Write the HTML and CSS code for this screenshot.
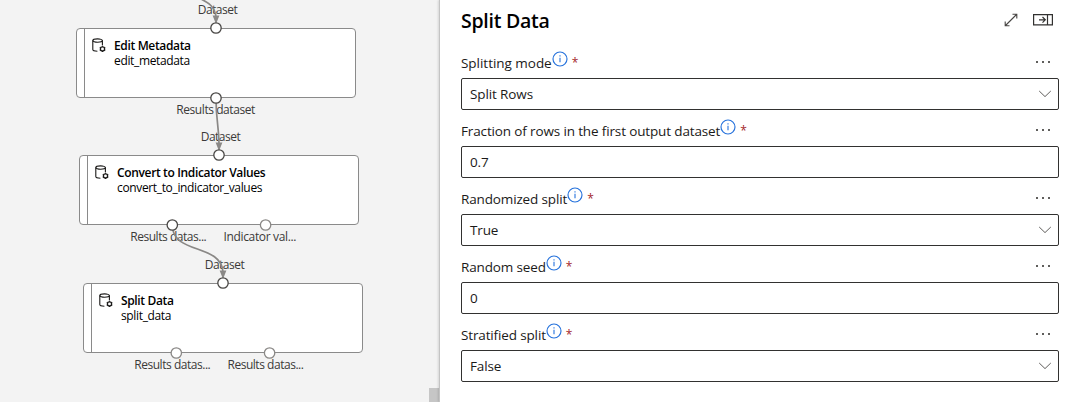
FILE: index.html
```html
<!DOCTYPE html>
<html lang="en">
<head>
<meta charset="utf-8">
<title>Split Data</title>
<link rel="stylesheet" href="styles.css">
</head>
<body>
<svg class="defs" width="0" height="0">
  <symbol id="database" viewBox="0 0 14 15">
    <g fill="none" stroke="#1b1a19" stroke-width="1.1">
      <ellipse cx="5.6" cy="2.6" rx="4.8" ry="1.7"/>
      <path d="M.8 2.6v9c0 1 1.700 1.700 4.600 1.700M10.400 2.600v4.600"/>
      <circle cx="10.500" cy="10.900" r="2.100" stroke-width="1.300"/>
      <path d="M10.500 7.800v1M10.500 13v1M7.800 9.300l.8.500M12.400 12l.8.500M7.800 12.500l.8-.5M12.400 9.800l.8-.5"/>
    </g>
  </symbol>
  <symbol id="info" viewBox="0 0 16 16">
    <circle cx="8" cy="8" r="7" fill="none" stroke="#2672dc" stroke-width="1.15"/>
    <path d="M8 6.7v4.6M8 4.3v1.2" stroke="#2672dc" stroke-width="1.1"/>
  </symbol>
  <symbol id="chevron" viewBox="0 0 14 8">
    <path d="M1.200 1l5.800 5.600L12.800 1" fill="none" stroke="#605e5c" stroke-width="1"/>
  </symbol>
  <symbol id="more" viewBox="0 0 16 4">
    <path d="M1 1h2v2H1zM7 1h2v2H7zM13 1h2v2h-2z" fill="#605e5c"/>
  </symbol>
</svg>
<main class="app">
  <section class="canvas">
    <article class="node node-edit">
      <svg class="node-icon"><use href="#database"/></svg>
      <div><h2 class="node-title">Edit Metadata</h2><p class="node-name">edit_metadata</p></div>
    </article>
    <article class="node node-convert">
      <svg class="node-icon"><use href="#database"/></svg>
      <div><h2 class="node-title">Convert to Indicator Values</h2><p class="node-name">convert_to_indicator_values</p></div>
    </article>
    <article class="node node-split">
      <svg class="node-icon"><use href="#database"/></svg>
      <div><h2 class="node-title">Split Data</h2><p class="node-name">split_data</p></div>
    </article>
    <svg class="edges" width="439" height="402" viewBox="0 0 439 402">
      <g class="port-label" text-anchor="middle">
        <text x="217.7" y="14" textLength="40">Dataset</text>
        <text x="215.8" y="114" textLength="79">Results dataset</text>
        <text x="220.7" y="141" textLength="40">Dataset</text>
        <text x="168.5" y="241" textLength="76.5">Results datas...</text>
        <text x="260" y="241" textLength="73">Indicator val...</text>
        <text x="224.7" y="269" textLength="40">Dataset</text>
        <text x="172.5" y="369" textLength="76.5">Results datas...</text>
        <text x="265.7" y="369" textLength="76.5">Results datas...</text>
      </g>
      <g class="edge">
        <path d="M201 -1C209 3 215 7 216 17"/>
        <path d="M216 98C216 122 219 126 219 144"/>
        <path d="M172.300 225C172.300 255 221 243 223 272"/>
      </g>
      <g class="arrow">
        <path d="M212.600 15.500h6.800L216 24z"/>
        <path d="M215.600 142.500h6.800L219 151z"/>
        <path d="M219.600 270.500h6.800L223 279z"/>
      </g>
      <g class="port">
        <circle cx="216" cy="28" r="5.200"/>
        <circle cx="216" cy="98" r="5.200"/>
        <circle cx="219" cy="155" r="5.200"/>
        <circle cx="172.300" cy="225" r="5.200"/>
        <circle cx="223" cy="283" r="5.200"/>
      </g>
      <g class="port port-open">
        <circle cx="265.600" cy="225" r="5.200"/>
        <circle cx="176.300" cy="353" r="5.200"/>
        <circle cx="269.600" cy="353" r="5.200"/>
      </g>
    </svg>
    <div class="scroll-corner"></div>
  </section>
  <aside class="panel">
    <header class="panel-header">
      <h1 class="panel-title">Split Data</h1>
      <div class="actions">
        <svg width="14" height="14" viewBox="0 0 14 14" fill="none" stroke="#484644" stroke-width="1.100"><path d="M1.500 12.500l11-11M8.500 1.200h4.300v4.300M1.200 8.500v4.300h4.300"/></svg>
        <svg width="20" height="12" viewBox="0 0 20 12" fill="none" stroke="#323130" stroke-width="1.200"><path d="M.6.600h18.800v10.300H.6zM14.500.600v10.300M6 5.800h6.300M9.500 3l2.800 2.800-2.800 2.800"/></svg>
      </div>
    </header>
    <div class="field">
      <div class="field-head"><label class="label label-wide">Splitting mode</label><svg class="info"><use href="#info"/></svg><span class="required">*</span><svg class="more"><use href="#more"/></svg></div>
      <div class="control"><span>Split Rows</span><svg class="chevron"><use href="#chevron"/></svg></div>
    </div>
    <div class="field">
      <div class="field-head"><label class="label">Fraction of rows in the first output dataset</label><svg class="info"><use href="#info"/></svg><span class="required">*</span><svg class="more"><use href="#more"/></svg></div>
      <div class="control"><span>0.7</span></div>
    </div>
    <div class="field">
      <div class="field-head"><label class="label">Randomized split</label><svg class="info"><use href="#info"/></svg><span class="required">*</span><svg class="more"><use href="#more"/></svg></div>
      <div class="control"><span>True</span><svg class="chevron"><use href="#chevron"/></svg></div>
    </div>
    <div class="field">
      <div class="field-head"><label class="label">Random seed</label><svg class="info"><use href="#info"/></svg><span class="required">*</span><svg class="more"><use href="#more"/></svg></div>
      <div class="control"><span>0</span></div>
    </div>
    <div class="field">
      <div class="field-head"><label class="label">Stratified split</label><svg class="info"><use href="#info"/></svg><span class="required">*</span><svg class="more"><use href="#more"/></svg></div>
      <div class="control"><span>False</span><svg class="chevron"><use href="#chevron"/></svg></div>
    </div>
  </aside>
</main>
</body>
</html>
```
FILE: styles.css
```css
* { box-sizing: border-box; }
body { margin: 0; font-family: "Open Sans", "Noto Sans", sans-serif; color: #1b1a19; overflow: hidden; }
h1, h2, p { margin: 0; }
.defs { position: absolute; }
.app { display: flex; width: 1072px; height: 402px; }
.canvas { position: relative; flex: 0 0 439px; background: #f3f3f3; overflow: hidden; }
.node {
  position: absolute; width: 280px; height: 70px; display: flex; gap: 8px;
  padding: 9px 0 0 15px; border: 1px solid #8a8a8a; border-radius: 4px;
  background: linear-gradient(#8a8a8a, #8a8a8a) 7px 0 / 1px 100% no-repeat #fff;
}
.node-edit { left: 76px; top: 28px; }
.node-convert { left: 79px; top: 155px; }
.node-split { left: 83px; top: 283px; }
.node-icon { width: 14px; height: 15px; }
.node-title { font-size: 12px; line-height: 15px; font-weight: 600; color: #000; letter-spacing: -0.35px; white-space: nowrap; }
.node-name { font-size: 12px; line-height: 16px; color: #000; letter-spacing: -0.35px; }
.edges { position: absolute; left: 0; top: 0; }
.port-label { font-size: 12px; fill: #3b3a39; }
.edge { fill: none; stroke: #8a8886; stroke-width: 1.7px; }
.arrow { fill: #8a8886; }
.port { fill: #fff; stroke: #484644; stroke-width: 1.3px; }
.port-open { stroke: #8a8886; }
.scroll-corner { position: absolute; right: 0; bottom: 0; width: 10px; height: 14px; background: #c6c6c6; }
.panel { flex: 1; border-left: 1px solid #c4c4c4; background: #fff; padding: 0 13px 0 21px; box-shadow: -1px 0 2px rgba(0, 0, 0, 0.12); z-index: 1; }
.panel-header { display: flex; align-items: center; justify-content: space-between; height: 42px; }
.panel-title { font-size: 19.5px; line-height: 28px; font-weight: 600; letter-spacing: -0.25px; color: #000; }
.actions { display: flex; align-items: center; gap: 15px; padding: 0 6px 3px 0; }
.field { height: 68px; }
.field-head { display: flex; height: 36px; padding-top: 9px; }
.label { font-size: 13.5px; line-height: 24px; letter-spacing: -0.14px; white-space: nowrap; }
.label-wide { letter-spacing: -0.03px; }
.info { width: 16px; height: 16px; }
.required { margin-left: 4px; font-size: 12px; line-height: 24px; color: #a4262c; }
.more { width: 16px; height: 4px; margin: 9px 8px 0 auto; }
.control { display: flex; align-items: center; justify-content: space-between; height: 32px; padding: 0 6px 0 8px; border: 1px solid #323130; border-radius: 2px; font-size: 13.5px; letter-spacing: -0.12px; }
.chevron { width: 14px; height: 8px; }
```
